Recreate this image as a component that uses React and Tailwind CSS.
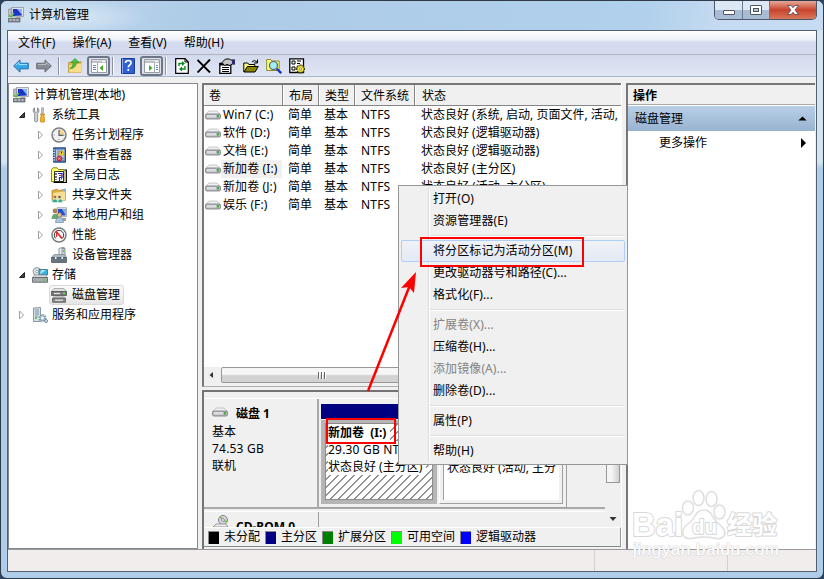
const treeItems = [
  { level: 0, icon: 'computer', text: '计算机管理(本地)' },
  { level: 1, icon: 'tools', text: '系统工具', state: 'open' },
  { level: 2, icon: 'clock', text: '任务计划程序', state: 'closed' },
  { level: 2, icon: 'events', text: '事件查看器', state: 'closed' },
  { level: 2, icon: 'log', text: '全局日志', state: 'closed' },
  { level: 2, icon: 'shared', text: '共享文件夹', state: 'closed' },
  { level: 2, icon: 'users', text: '本地用户和组', state: 'closed' },
  { level: 2, icon: 'perf', text: '性能', state: 'closed' },
  { level: 2, icon: 'device', text: '设备管理器' },
  { level: 1, icon: 'storage', text: '存储', state: 'open' },
  { level: 2, icon: 'disk', text: '磁盘管理', selected: true },
  { level: 1, icon: 'services', text: '服务和应用程序', state: 'closed' },
]

const indents = ['pl-1', 'pl-2', 'pl-[27px]']

const volumes = [
  { name: 'Win7 (C:)', status: '状态良好 (系统, 启动, 页面文件, 活动,' },
  { name: '软件 (D:)', status: '状态良好 (逻辑驱动器)' },
  { name: '文档 (E:)', status: '状态良好 (逻辑驱动器)' },
  { name: '新加卷 (I:)', status: '状态良好 (主分区)', selected: true },
  { name: '新加卷 (J:)', status: '状态良好 (活动, 主分区)' },
  { name: '娱乐 (F:)', status: '' },
]

const menuItems = [
  { text: '打开(O)' },
  { text: '资源管理器(E)' },
  { sep: true },
  { text: '将分区标记为活动分区(M)', hot: true },
  { text: '更改驱动器号和路径(C)...' },
  { text: '格式化(F)...' },
  { sep: true },
  { text: '扩展卷(X)...', disabled: true },
  { text: '压缩卷(H)...' },
  { text: '添加镜像(A)...', disabled: true },
  { text: '删除卷(D)...' },
  { sep: true },
  { text: '属性(P)' },
  { sep: true },
  { text: '帮助(H)' },
]

const legend = [
  { color: 'bg-black', text: '未分配', width: 'w-[57px]' },
  { color: 'bg-[#000080]', text: '主分区', width: 'w-[57px]' },
  { color: 'bg-[#008000]', text: '扩展分区', width: 'w-[69px]' },
  { color: 'bg-[#00ff00]', text: '可用空间', width: 'w-[69px]' },
  { color: 'bg-[#0000ff]', text: '逻辑驱动器', width: 'w-[90px]' },
]

const drawings = {
  computer: (
    <>
      <path d="M0 2.5 4 1.5v8H0z" fill="#b9bcc0" stroke="#777b80" strokeWidth=".6" />
      <path d="M3.5.5h12v9l-11 .5z" fill="#dfe2e6" stroke="#8a8d92" strokeWidth=".7" />
      <path d="M5 2h9v6.5L5 9z" fill="#1b35c8" />
      <path d="M9 2h5v6z" fill="#8fb4f5" />
      <path d="M8 10h4l1 2H7z" fill="#a5a9ae" />
      <path d="M0 11.5h12v3.5H0z" fill="#85898f" stroke="#4e5257" strokeWidth=".6" />
      <path d="M1.5 13h2M5 13h2M8.500 13h2" stroke="#e6e8ea" />
      <path d="m1 8 2 2 3-4" stroke="#4fc52e" strokeWidth="1.2" fill="none" />
    </>
  ),
  tools: (
    <>
      <path d="M2.500.8v3.700L4 5.500l1.500-1V.8C7.500 2 7.300 5 5.700 6.500V14q-1.500 2-3 0V6.500C.8 5 .6 2 2.500.8z" fill="#d4d7db" stroke="#74787e" strokeWidth=".8" />
      <path d="M9.500.8h2l-.3 6h-1.400z" fill="#c7cbd0" stroke="#7d8187" strokeWidth=".6" />
      <path d="M8.500 7h4l-.7 2 .9 2.500-.4 3.500H8.700l-.4-3.500.9-2.500z" fill="#f5b324" stroke="#b87c11" strokeWidth=".7" />
    </>
  ),
  clock: (
    <>
      <circle cx="8" cy="8" r="7" fill="#eef0f2" stroke="#7f7f80" strokeWidth="1.500" />
      <path d="M8 2a6 6 0 0 1 5.500 6H8z" fill="#f1d68c" />
      <path d="M8 3v5.300h4.500" fill="none" stroke="#5a6270" strokeWidth="1.200" />
      <path d="M2.500 8h1M12.500 8h1M8 13v-1" stroke="#7796b8" />
    </>
  ),
  events: (
    <>
      <path d="M2.500.8h12v14.400h-12z" fill="#4c72b4" stroke="#294982" />
      <path d="M5 2.500h8.500v11H5z" fill="#b9cce6" />
      <path d="M1 3h3M1 5.500h3M1 8h3M1 10.500h3M1 13h3" stroke="#d3dae5" />
      <path d="M6 4h3M6 6h2M6 8h2M11 11h3M11 13h3" stroke="#53719d" strokeWidth=".8" />
      <path d="m10.500 2.500 3.300 5.500H7.300z" fill="#ffdb29" stroke="#a78712" strokeWidth=".6" />
      <path d="M10.500 4.500v2" stroke="#222" />
      <circle cx="8.300" cy="11.500" r="2.600" fill="#db2828" stroke="#942020" strokeWidth=".5" />
      <path d="m7.300 10.500 2 2m0-2-2 2" stroke="#fff" strokeWidth=".8" />
    </>
  ),
  log: (
    <>
      <path d="M.5 2.500 2 .8h4l1.500 1.700H13v12H.5z" fill="#ffff73" stroke="#89870c" />
      <path d="M13.500 3h1.800v12.500H2.500" fill="none" stroke="#000" strokeWidth="1.200" />
      <path d="M3.500 4.500h9v10h-9z" fill="#fff" stroke="#000" strokeWidth=".8" />
      <path d="M5 6v7" stroke="#111" strokeWidth="1.200" strokeDasharray="2 1" />
      <path d="M7 6.500h4v4H8.500V14" stroke="#1421bd" strokeWidth="1.200" fill="none" />
      <path d="M8 8.500h2.500v4" stroke="#e22121" fill="none" />
    </>
  ),
  shared: (
    <>
      <path d="M1 3.500 6.500 2l1 1.500L14.500 2v11L1 14z" fill="#dcae43" stroke="#b08a35" strokeWidth=".7" />
      <path d="M2 5.500 14.500 4v9.500H2z" fill="#f8df96" stroke="#c9a348" strokeWidth=".5" />
      <path d="m11 2.500 3-.7v3z" fill="#7eb7e8" />
      <circle cx="4" cy="10" r="1.300" fill="#9b6944" />
      <circle cx="8.500" cy="10" r="1.300" fill="#56606e" />
      <path d="M1 15.500q.2-3.500 3-3.500t3 3.500zM6.500 15.500q.2-3.500 2.700-3.500t2.500 3.500z" fill="#36a98f" stroke="#fff" strokeWidth=".5" />
    </>
  ),
  users: (
    <>
      <path d="M6 .7h9.500v9H6z" fill="#dce0e7" stroke="#8b929d" strokeWidth=".7" />
      <path d="M7 2h7.500v6.500H7z" fill="#2450cb" />
      <path d="M11 2h3.500v6z" fill="#8eb3f1" />
      <path d="M10 11h5v3h-5z" fill="#9b9fa5" />
      <circle cx="4" cy="4" r="2.400" fill="#a9814f" />
      <path d="M.5 12q.2-5 3.500-5t3.500 5z" fill="#6aa871" />
      <circle cx="8.500" cy="8" r="2.300" fill="#e5bc8d" stroke="#8e643a" strokeWidth=".7" />
      <path d="M4.500 15.500q.2-5 4-5t4 5z" fill="#a9c6dd" stroke="#4c718f" strokeWidth=".5" />
    </>
  ),
  perf: (
    <>
      <circle cx="8" cy="8" r="7" fill="#fbfbfb" stroke="#777d82" strokeWidth="1.500" />
      <path d="M4.800 11.500a4.700 4.700 0 1 1 6.400 0" fill="none" stroke="#383838" strokeWidth="1" />
      <path d="m4.700 4 6.300 7.500" stroke="#e22424" strokeWidth="1.800" />
      <path d="M5.500 5v5" stroke="#db3131" strokeWidth="1.200" />
    </>
  ),
  device: (
    <>
      <path d="M8 1.500 13 0v9H8z" fill="#eef1f3" stroke="#777f84" strokeWidth=".8" />
      <path d="M11 1.500h3v8.500h-3z" fill="#d4d9dc" stroke="#6c7375" strokeWidth=".7" />
      <path d="M12 3h1.500v2H12z" fill="#6cc833" />
      <path d="m3 7.500-2.500 3h15l-2-3z" fill="#abb9c3" stroke="#697782" strokeWidth=".6" />
      <path d="M.5 10.500h15v5H.5z" fill="#66747f" stroke="#465058" strokeWidth=".7" />
      <path d="M4 10h1.500v2H4zm6.500 0H12v2h-1.500z" fill="#edf1f3" />
    </>
  ),
  storage: (
    <>
      <circle cx="5" cy="4.500" r="4" fill="#dadddf" stroke="#84888c" strokeWidth=".8" />
      <circle cx="5" cy="4.500" r="1.200" fill="#fff" stroke="#919599" strokeWidth=".7" />
      <path d="M7 2.500h8.500V8H7z" fill="#38b1df" stroke="#306d8c" strokeWidth=".8" />
      <path d="m9 3 5 0-6 4.500z" fill="#a8e5f7" />
      <path d="m2.500 8-2 2.500h15L13.500 8z" fill="#d7dadc" stroke="#888c91" strokeWidth=".6" />
      <path d="M.5 10.500h15v4.800H.5z" fill="#a6aaaf" stroke="#585d62" strokeWidth=".8" />
      <path d="M11 12h3v2h-3z" fill="#54da30" />
    </>
  ),
  disk: (
    <>
      <path d="M3 1.500h10l2.500 3H.5z" fill="#e0e0e0" stroke="#8a8a8a" strokeWidth=".6" />
      <path d="M.5 4.500h15v4H.5z" fill="#787878" stroke="#454545" strokeWidth=".7" />
      <path d="M3 6.500h6" stroke="#e5e5e5" strokeWidth="1.200" />
      <path d="M12 5.500h2v1.500h-2z" fill="#5fe239" />
      <path d="m3 9-1.500 2h13L13 9z" fill="#c5c5c5" />
      <path d="M1.500 11h13v4.300h-13z" fill="#828282" stroke="#535353" strokeWidth=".7" />
      <path d="M4 12.500h8v1.500H4z" fill="#d7d7d7" />
    </>
  ),
  services: (
    <>
      <path d="M1.500 1 8.500.5v14h-7z" fill="#d6dee6" stroke="#74828d" strokeWidth=".8" />
      <path d="M3 3h4M3 5h4M3 7h4M3 9h3" stroke="#7893a8" />
      <path d="M3 11h2" stroke="#47b82e" strokeWidth="1.500" />
      <circle cx="10.500" cy="11" r="3" fill="#d5e5ef" stroke="#7392a8" strokeWidth="2" strokeDasharray="1.400 .9" />
      <circle cx="10.500" cy="11" r="2.200" fill="#eaf3f8" stroke="#7697ae" strokeWidth=".8" />
      <circle cx="14" cy="14" r="1.500" fill="#dce9f1" stroke="#6e8da2" />
    </>
  ),
}

function Icon({ name, className = '' }) {
  return (
    <svg viewBox="0 0 16 16" className={`h-4 w-4 shrink-0 ${className}`}>
      {drawings[name]}
    </svg>
  )
}

function DriveIcon({ className = '' }) {
  return (
    <svg viewBox="0 0 16 10" className={`h-[10px] w-4 shrink-0 ${className}`}>
      <path d="M.5 4.500 4 1h8l3.500 3.500z" fill="#efeff0" stroke="#b4b5b8" strokeWidth=".7" />
      <path d="M2 4h12q1.500 0 1.500 1.500v2Q15.500 9 14 9H2Q.5 9 .5 7.500v-2Q.5 4 2 4z" fill="#b9babf" stroke="#74757c" strokeWidth=".8" />
      <path d="M2 5h9v2.500H2z" fill="#dcdce0" />
      <path d="M12 5h2v2.500h-2z" fill="#36b831" />
    </svg>
  )
}

function TreeItem({ item }) {
  return (
    <div className={`flex h-5 items-center ${indents[item.level]}`}>
      {item.level > 0 && (
        <svg viewBox="0 0 10 10" className="mr-[5px] h-[10px] w-[10px] shrink-0">
          {item.state === 'open' && <path d="M7.500 2.500v5H2.500z" fill="#404040" stroke="#262626" />}
          {item.state === 'closed' && <path d="M2.500 1v8l4-4z" fill="#fff" stroke="#a0a0a0" />}
        </svg>
      )}
      <div
        className={`flex h-5 items-center ${item.selected
          ? '-ml-0.5 rounded-[3px] border border-[#d9d9d9] bg-linear-to-b from-[#fafafa] to-[#e6e6e6] pr-[3px] pl-px'
          : ''}`}
      >
        <Icon name={item.icon} />
        <span className={item.level === 1 ? 'ml-1' : 'ml-[5px]'}>{item.text}</span>
      </div>
    </div>
  )
}

function Separator() {
  return <div className="h-[18px] w-px bg-[#8b93a3] shadow-[1px_0_0_#fff]" />
}

function PaneButton({ dir, className }) {
  return (
    <div className={`flex h-5 w-[23px] items-center justify-center rounded-[3px] border-2 border-[#6d7689] bg-[#dde1e9] ${className}`}>
      <svg viewBox="0 0 16 14" className="h-[14px] w-4 shrink-0">
        <path d="M.5.500h15v13H.5z" fill="#fff" stroke="#979ca4" />
        <path d="M1 1.500h14v2.500H1z" fill="#bcc2ca" />
        <path d="M11 2.500h3" stroke="#fff" />
        {dir === 'left' ? (
          <>
            <path d="M6.500 4v9.500" stroke="#a5abb4" />
            <path d="M2 6.500h3M2 8.500h3M2 10.500h3" stroke="#6686b6" />
            <path d="M12 6v6L8.500 9z" fill="#42aa2a" />
          </>
        ) : (
          <>
            <path d="M10.500 4v9.500" stroke="#a5abb4" />
            <path d="M12 6.500h2M12 8.500h2M12 10.500h2" stroke="#6686b6" />
            <path d="M5 6v6l3.500-3z" fill="#42aa2a" />
          </>
        )}
      </svg>
    </div>
  )
}

function Toolbar() {
  return (
    <div className="flex h-[22px] shrink-0 items-center border-b border-[#a9b4ca] bg-linear-to-b from-[#d3daed] to-[#e1e6f4] pl-[5px]">
      <svg viewBox="0 0 16 14" className="h-[14px] w-4">
        <path d="M.7 7 7 .9v3.300h8.300v5.600H7v3.300z" fill="#36aae8" stroke="#2470a8" />
        <path d="m2.500 6.500 3.500-3v2h8" stroke="#9de0ff" fill="none" />
      </svg>
      <svg viewBox="0 0 16 14" className="ml-[7px] h-[14px] w-4">
        <path d="M15.300 7 9 .9v3.300H.7v5.600H9v3.300z" fill="#868b91" stroke="#686c72" />
        <path d="M2 5.500h8v-2l3.500 3" stroke="#b9bdc2" fill="none" />
      </svg>
      <div className="mr-[8px] ml-[6px]"><Separator /></div>
      <svg viewBox="0 0 16 16" className="h-4 w-4">
        <path d="m1.500 4.500 4-.5 1 1.500 7.500-2v11h-12.500z" fill="#e2b44b" stroke="#b88e32" strokeWidth=".7" />
        <path d="M2.500 7 14.500 5.500v9h-12z" fill="#f9dc87" />
        <path d="M3 10.500q3-1.500 3.500-6H4L8 .5l4 4H9.300q-.5 6-6.300 6z" fill="#4dc533" stroke="#278d20" strokeWidth=".7" />
      </svg>
      <PaneButton dir="left" className="ml-[4px]" />
      <div className="mr-[8px] ml-[2px]"><Separator /></div>
      <svg viewBox="0 0 14 16" className="h-4 w-[14px]">
        <path d="M.5.500h13v15H.500z" fill="#2f5fd0" stroke="#193d92" />
        <path d="M1.500.500v15" stroke="#89aaf0" />
        <path d="M4.500 5q0-2.500 2.800-2.500T10 5q0 1.300-1.500 2.200-1.200.8-1.200 2.300M7.300 11v2" stroke="#fff" strokeWidth="1.700" fill="none" />
      </svg>
      <PaneButton dir="right" className="ml-[5px]" />
      <div className="mr-[9px] ml-[2px]"><Separator /></div>
      <svg viewBox="0 0 14 16" className="h-4 w-[14px]">
        <path d="M.7.700h9.300l3.300 3.300v11.300H.700z" fill="#fff" stroke="#000" strokeWidth="1.200" />
        <path d="M10 .7V4h3.300" fill="none" stroke="#000" />
        <path d="M4 8V5.500h3.500M10 8v3H6.500" stroke="#078d18" strokeWidth="1.400" fill="none" />
        <path d="m7 3 3 2.500-3 2.500zM7 8.500 4 11l3 2.500z" fill="#078d18" />
      </svg>
      <svg viewBox="0 0 14 14" className="ml-2 h-[14px] w-[14px]">
        <path d="m.5 1 12.500 12.500M13 .5.5 13.500" stroke="#000" strokeWidth="1.900" />
      </svg>
      <svg viewBox="0 0 16 16" className="ml-[8px] h-4 w-4">
        <path d="M.8 5.500h11v9.800h-11z" fill="#fff" stroke="#000" strokeWidth="1.300" />
        <path d="M.8 5.500h11v2h-11z" fill="#000" />
        <path d="M3 9.500h7M3 11.500h7M3 13.500h7" stroke="#000" />
        <path d="M3 4.500 6.500 1h4l1 1H16v4h-3l-2 1.500-3-1-2.500 1z" fill="#c5c5c5" stroke="#000" />
        <path d="M13 2h3v4h-3z" fill="#292c73" />
      </svg>
      <svg viewBox="0 0 16 16" className="ml-[8px] h-4 w-4">
        <path d="M.8 14V5h4l1 1.500h6v2.500" fill="#ffff87" stroke="#000" />
        <path d="m1 14 3.300-5.500h11L12 14z" fill="#898300" stroke="#000" />
        <path d="M9 4q2-3 5 0M14.500 1.500V5H11" fill="none" stroke="#000" />
      </svg>
      <svg viewBox="0 0 16 16" className="ml-[7px] h-4 w-4">
        <path d="M.7 3V1.500h4l1 1.500h7.500v9.500H.7z" fill="#ffff75" stroke="#8e8a33" />
        <circle cx="7.500" cy="7.500" r="4" fill="#a2edfa" stroke="#51606c" strokeWidth="1.200" />
        <path d="m10.700 10.700 4.500 4.500" stroke="#1432cd" strokeWidth="2.300" />
      </svg>
      <svg viewBox="0 0 16 16" className="ml-[7px] h-4 w-4">
        <path d="M.8.800h13.700v13.700H.800z" fill="#fff" stroke="#000" strokeWidth="1.300" />
        <path d="M3 3h3v3H3zM3 9h3v3H3z" fill="none" stroke="#000" />
        <path d="M8 3h4M8 5.500h3M7 10h3" stroke="#000" strokeWidth="1.200" />
        <path d="M11.500 6.500v9M7 11h9M8.300 7.800l6.400 6.400M14.700 7.800l-6.400 6.400" stroke="#3d390c" strokeWidth="2.200" />
        <circle cx="11.500" cy="11" r="3" fill="#fff347" stroke="#c5b91e" strokeWidth=".8" />
        <circle cx="11.500" cy="11" r="1.200" fill="#fff" stroke="#72680b" strokeWidth=".7" />
      </svg>
    </div>
  )
}

function TitleBar() {
  return (
    <div className="flex h-[29px] shrink-0 items-start bg-[radial-gradient(ellipse_90px_18px_at_60px_16px,#dbe8f5,#dbe8f500),linear-gradient(100deg,#c3daef_0%,#adcbe7_25%,#b1d0ec_78%,#c6dbf1_88%)]">
      <Icon name="computer" className="mt-[6px] ml-[7px]" />
      <span className="mt-[4px] ml-[5px] leading-5">计算机管理</span>
      <div className="mr-[6px] ml-auto flex h-[19px] w-[103px] overflow-hidden rounded-b-[5px] border border-t-0 border-[#4e5868]">
        <div className="flex w-7 items-center justify-center border-r border-[#6d7a8c] bg-linear-to-b from-[#dce8f4] from-50% to-[#a8bdd3] to-50%">
          <div className="mt-[5px] h-[5px] w-3 rounded-[1px] border border-[#4e5361] bg-white" />
        </div>
        <div className="flex w-[27px] items-center justify-center border-r border-[#6d7a8c] bg-linear-to-b from-[#dce8f4] from-50% to-[#a8bdd3] to-50%">
          <div className="h-[10px] w-3 rounded-[1px] border border-[#4e5361] bg-white p-[2px]">
            <div className="h-[4px] w-[6px] border border-[#4e5361] bg-[#b8c7d8]" />
          </div>
        </div>
        <div className="flex flex-1 items-center justify-center bg-linear-to-b from-[#e5a898] via-[#c8412a] via-50% to-[#d8775b]">
          <svg viewBox="0 0 12 10" className="h-[10px] w-3">
            <path d="M.5.500h3.500l2 2.200L8 .5h3.500L8 5l3.500 4.500H8L6 7.300 4 9.500H.5L4 5z" fill="#fff" stroke="#53525f" strokeWidth=".9" />
          </svg>
        </div>
      </div>
    </div>
  )
}

function VolumeList() {
  return (
    <div className="flex h-[304px] shrink-0 flex-col border-t-2 border-b border-l-2 border-[#777] border-b-[#b0b0b0] bg-white">
      <div className="flex h-[21px] shrink-0 border-b border-[#858585] bg-[#f0f0f0] leading-[21px]">
        <div className="w-[79px] border-r border-[#858585] border-l border-l-white pl-[4px]">卷</div>
        <div className="w-9 border-r border-[#858585] border-l border-l-white pl-[5px]">布局</div>
        <div className="w-9 border-r border-[#858585] border-l border-l-white pl-[5px]">类型</div>
        <div className="w-[60px] border-r border-[#858585] border-l border-l-white pl-[5px] whitespace-nowrap">文件系统</div>
        <div className="flex-1 border-l border-l-white pl-[6px]">状态</div>
      </div>
      <div className="flex-1 overflow-hidden">
        {volumes.map(v => (
          <div key={v.name} className="flex h-[18px] items-center whitespace-nowrap">
            <DriveIcon className="ml-px" />
            <div className="w-[67px]">
              <span className={`block w-[61px] pl-[2px] leading-[18px] tracking-[0.1px] ${v.selected ? 'bg-[#f0f0f0]' : ''}`}>{v.name}</span>
            </div>
            <div className="w-9">简单</div>
            <div className="w-9">基本</div>
            <div className="w-[60px] pl-px tracking-[0.2px]">NTFS</div>
            <div className="flex-1 pl-px">{v.status}</div>
          </div>
        ))}
      </div>
      <div className="mb-[3px] flex h-4 shrink-0 items-center bg-[#efefef] shadow-[0_3px_0_#f0f0f0]">
        <svg viewBox="0 0 17 17" className="h-[17px] w-[17px]">
          <path d="M9 5v6L5.500 8z" fill="#333" />
        </svg>
        <div className="flex h-4 w-[202px] items-center justify-center gap-px rounded-[2px] border border-[#989898] bg-linear-to-b from-[#f6f6f6] from-45% to-[#d2d2d2] to-55%">
          <div className="h-[7px] w-[2px] border-r border-white bg-[#666]" />
          <div className="h-[7px] w-[2px] border-r border-white bg-[#666]" />
          <div className="h-[7px] w-[2px] border-r border-white bg-[#666]" />
        </div>
      </div>
    </div>
  )
}

function DiskGraph() {
  return (
    <div className="mt-[3px] flex min-h-0 flex-1 flex-col border-t-2 border-l-2 border-[#737373] bg-[#f0f0f0]">
      <div className="flex h-[135px] overflow-hidden">
        <div className="flex w-[401px] flex-col pt-[6px]">
          {/* disk 1 */}
          <div className="flex h-[111px] shrink-0 border-t border-b-2 border-t-white border-b-[#aaa]">
            <div className="w-[115px] border-r-2 border-[#aaa] pt-[5px] pl-[8px]">
              <div className="flex h-[19px] items-center">
                <DriveIcon className="mb-1" />
                <span className="mt-px ml-[8px] font-bold">磁盘 1</span>
              </div>
              <div className="h-[17px] leading-[17px]">基本</div>
              <div className="h-[17px] leading-[17px] tracking-[0.2px]">74.53 GB</div>
              <div className="h-[17px] leading-[17px]">联机</div>
            </div>
            <div className="ml-px h-[109px] w-[247px] border-r border-b border-[#a0a0a0] pt-[5px] pl-px">
              <div className="h-[15px] w-[243px] bg-[#000080]" />
              <div className="flex h-[85px] pt-px">
                <div className="h-[84px] w-[116px] border-4 border-t-[3px] border-[#b5b5b5]">
                  <div className="h-full border border-[#8c8c8c] bg-[repeating-linear-gradient(135deg,#fff_0,#fff_4.900px,#909090_4.900px,#909090_5.657px)] pl-[2px] whitespace-nowrap">
                    <div className="w-fit bg-white pr-1 font-bold leading-[17px]">新加卷&nbsp; (I:)</div>
                    <div className="w-fit bg-white pr-1 leading-[17px] tracking-[0.2px]">29.30 GB NTFS</div>
                    <div className="w-fit bg-white pr-1 leading-[17px]">状态良好 (主分区)</div>
                  </div>
                </div>
                <div className="ml-[2px] h-[84px] w-[124px] border border-[#a0a0a0] border-t-white border-l-white p-[3px]">
                  <div className="h-full overflow-hidden border-t border-l border-[#a0a0a0] bg-white pl-[3px] whitespace-nowrap">
                    <div className="font-bold leading-[17px]">新加卷&nbsp; (J:)</div>
                    <div className="leading-[17px]">45.23 GB NTFS</div>
                    <div className="leading-[17px]">状态良好 (活动, 主分</div>
                  </div>
                </div>
              </div>
            </div>
          </div>
          {/* cd-rom */}
          <div className="mt-[2px] flex h-[60px] shrink-0 border-t border-white">
            <div className="flex w-[115px] items-start border-r border-[#a0a0a0] pl-[8px]">
              <svg viewBox="0 0 18 18" className="mt-[3px] h-[18px] w-[18px]">
                <circle cx="11" cy="5" r="4.500" fill="#d9d5df" stroke="#85818d" />
                <path d="M11 5 8 1.500M11 5l4 2" stroke="#73c34b" strokeWidth="1.500" />
                <circle cx="11" cy="5" r="1.400" fill="#fff" stroke="#918e96" />
                <path d="m4 9-3 3h15l-2-3z" fill="#eee" stroke="#999" />
                <path d="M1 12h15v4H1z" fill="#aaa" />
              </svg>
              <span className="mt-[5px] ml-[6px] font-bold leading-[20px] whitespace-nowrap">CD-ROM 0</span>
            </div>
          </div>
        </div>
        <div className="flex w-4 flex-col bg-[#f0f0f0]">
          <div className="mx-px h-[91px] border border-[#999] bg-linear-to-r from-[#f5f5f5] from-40% to-[#cfcfcf]" />
          <svg viewBox="0 0 16 17" className="mt-auto h-[17px] w-4">
            <path d="M4.500 7h7L8 11z" fill="#333" />
          </svg>
        </div>
      </div>
      <div className="flex h-5 items-center border-t border-r border-b border-t-white border-r-[#999] border-b-[#888] pl-[4px] leading-[18px] whitespace-nowrap">
        {legend.map(l => (
          <div key={l.text} className={`flex items-center ${l.width}`}>
            <div className={`h-[13px] w-[11px] shrink-0 border-t border-l border-[#888] ${l.color}`} />
            <span className="ml-[5px]">{l.text}</span>
          </div>
        ))}
      </div>
    </div>
  )
}

function ContextMenu() {
  return (
    <div className="absolute top-[185px] left-[398px] h-[280px] w-[230px] border border-[#979797] bg-[#f0f0f0] bg-[linear-gradient(90deg,#dcdcdc_50%,#fff_50%)] bg-[length:2px_274px] bg-[position:29px_2px] bg-no-repeat p-[2px]">
      {menuItems.map((m, i) =>
        m.sep ? (
          <div key={i} className="ml-[29px] flex h-2 items-center">
            <div className="h-[2px] w-full border-b border-white bg-[#dedede]" />
          </div>
        ) : (
          <div
            key={i}
            className={`flex h-[22px] items-center rounded-[2px] border pl-[31px] tracking-[0.1px] ${m.hot
              ? 'border-[#aecff7] bg-linear-to-b from-[#f0f2f5] to-[#e3eaf5]'
              : 'border-transparent'} ${m.disabled ? 'text-[#838383]' : ''}`}
          >
            {m.text}
          </div>
        )
      )}
    </div>
  )
}

function Watermark() {
  return (
    <svg viewBox="0 0 160 80" className="absolute top-[486px] left-[628px] h-20 w-40 overflow-visible">
      <g fill="#fff" stroke="#dedede" strokeWidth="1.500">
        <ellipse cx="60" cy="22" rx="5.500" ry="7" />
        <ellipse cx="70.500" cy="12" rx="5.500" ry="7.500" />
        <ellipse cx="83.500" cy="13" rx="5.500" ry="7.500" />
        <ellipse cx="91.500" cy="26" rx="5.500" ry="7" />
        <path d="M76 24q6 0 9 7 3 5 7 8 7 6 4 11-3 4-10 2-10-2-20 0-8 2-11-3-2-6 5-11 5-4 7-8 3-6 9-6z" />
      </g>
      <g fill="#fff" stroke="#d8d8d8" strokeWidth="2" paintOrder="stroke" strokeLinejoin="round">
        <text x="4" y="50" textLength="51" lengthAdjust="spacingAndGlyphs" className="font-['Liberation_Sans'] text-[34px] font-bold">Bai</text>
        <text x="64" y="48" textLength="25" lengthAdjust="spacingAndGlyphs" className="font-['Liberation_Sans'] text-[21px] font-bold">du</text>
        <text x="99" y="48" className="text-[25px] font-bold">经验</text>
        <text x="5" y="69" textLength="146" strokeWidth="1.200" className="font-['Liberation_Sans'] text-[17px]">jingyan.baidu.com</text>
      </g>
    </svg>
  )
}

export default function App() {
  return (
    <div className="h-[579px] w-[824px] bg-[#2c4460] font-['Noto_Sans','Noto_Sans_CJK_SC',sans-serif] text-[12px] text-black">
      <div className="relative flex h-[579px] w-[824px] flex-col overflow-hidden rounded-[7px] border border-[#2f3b49] bg-linear-to-b from-[#d2e3f2] from-28% to-[#afcce9] to-29%">
        <TitleBar />
        <div className="mr-[6px] ml-[6px] flex h-[542px] flex-col border border-[#54606e] bg-[#f0f0f0]">
          <div className="flex h-[24px] shrink-0 items-center gap-[17px] border-b border-[#b1b5bf] bg-linear-to-b from-white via-[#f0f3fa] via-35% to-[#d4dbee] to-50% pl-[10px] shadow-[0_1px_0_#fff]">
            <span>文件(F)</span>
            <span>操作(A)</span>
            <span>查看(V)</span>
            <span>帮助(H)</span>
          </div>
          <Toolbar />
          <div className="flex h-[472px] shrink-0 pt-[6px]">
            <div className="h-[466px] w-[190px] border border-[#828790] bg-white pt-px">
              {treeItems.map(t => <TreeItem key={t.text} item={t} />)}
            </div>
            <div className="ml-1 flex h-[466px] w-[420px] flex-col border-r border-white">
              <VolumeList />
              <DiskGraph />
            </div>
            <div className="ml-[4px] h-[466px] w-[189px] border-t-2 border-l-2 border-[#777] bg-white">
              <div className="h-[20px] border-b border-[#aaa] bg-[#f0f0f0] pl-[5px] font-bold leading-[21px]">操作</div>
              <div className="mt-px flex h-[25px] items-center bg-linear-to-b from-[#b9cfe6] to-[#98b3d1] pr-[8px] pl-[7px]">
                <span>磁盘管理</span>
                <svg viewBox="0 0 10 6" className="ml-auto h-[5px] w-[9px]"><path d="M0 5.500h10L5 .5z" /></svg>
              </div>
              <div className="flex h-[24px] items-center pr-[9px] pl-[31px]">
                <span>更多操作</span>
                <svg viewBox="0 0 5 10" className="ml-auto h-[10px] w-[5px]"><path d="M0 0v10l5-5z" /></svg>
              </div>
            </div>
          </div>
          <div className="flex min-h-0 flex-1 border-t border-[#999] bg-[#f0edec]">
            <div className="w-[587px] border-r border-[#d2d0d0]" />
            <div className="w-[133px] border-r border-[#d2d0d0]" />
          </div>
        </div>
      </div>

      <ContextMenu />
      <Watermark />

      {/* callouts */}
      <div className="absolute top-[237px] left-[420px] h-[30px] w-[164px] border-2 border-[#f00]" />
      <div className="absolute top-[418px] left-[326px] h-[26px] w-[70px] border-2 border-[#f00]" />
      <svg viewBox="0 0 60 130" className="absolute top-[268px] left-[362px] h-[130px] w-[60px]">
        <path d="M6 123 48 17" stroke="#f00" strokeWidth="2.500" />
        <path d="m54 4-15 16 8-1 5 6z" fill="#f00" />
      </svg>
    </div>
  )
}
